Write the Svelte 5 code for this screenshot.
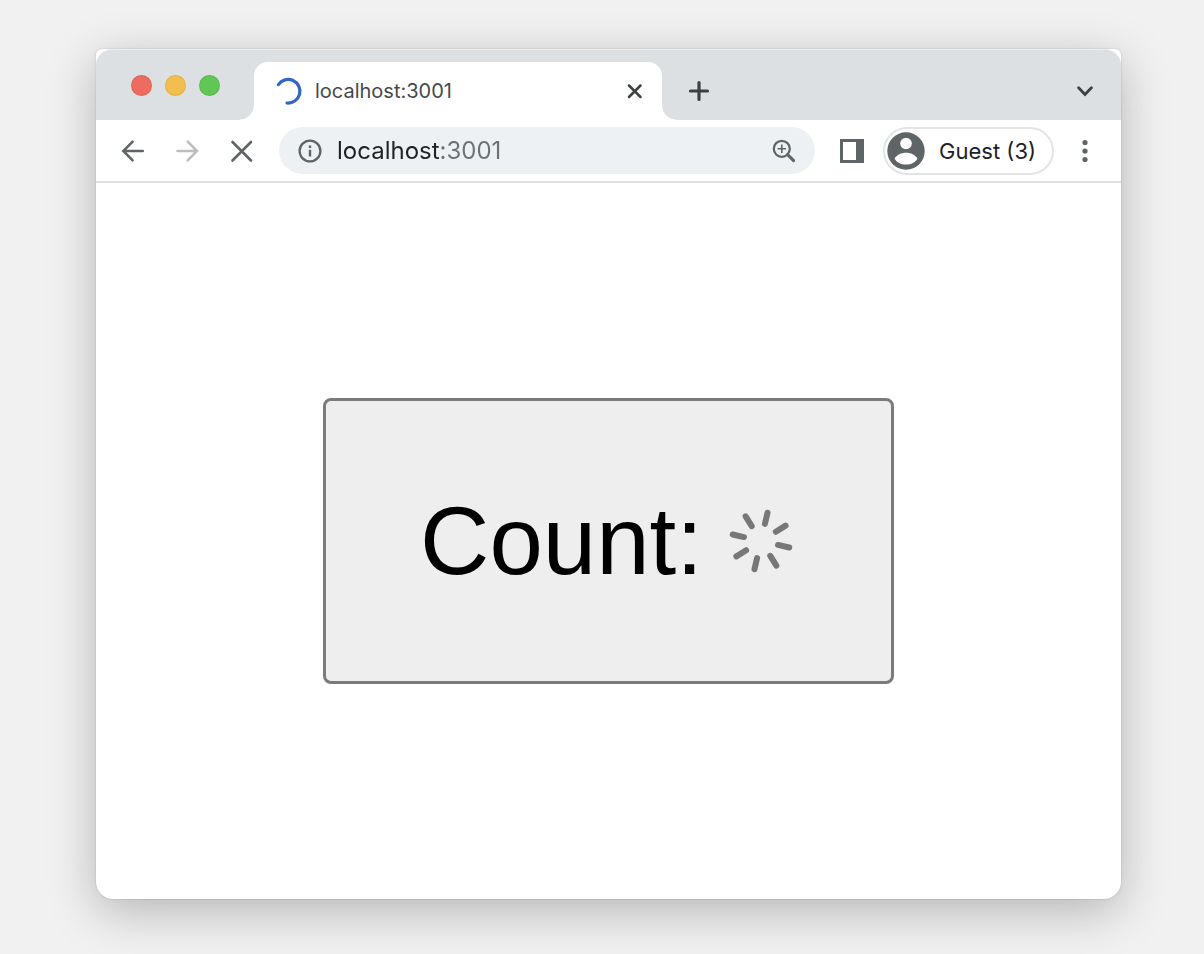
<script>
  const host = 'localhost';
  const port = 3001;
  let address = $state(`${host}:${port}`);
  const spokes = [0, 45, 90, 135, 180, 225, 270, 315];
</script>

<main class="desktop">
  <section class="window" aria-label="Browser window">
    <header class="tab-strip">
      <div class="lights">
        <button class="light close" aria-label="Close window"></button>
        <button class="light minimize" aria-label="Minimize window"></button>
        <button class="light zoom" aria-label="Zoom window"></button>
      </div>
      <div class="tab">
        <svg class="tab-loader" viewBox="0 0 26 26" aria-hidden="true">
          <path d="M2.400 6.600A11.800 11.800 0 1 1 11 25" fill="none" stroke="#3367c6" stroke-width="3.200" stroke-linecap="round" />
        </svg>
        <span class="tab-title">{host}:{port}</span>
        <button class="tab-close" aria-label="Close tab">
          <svg width="16" height="16" viewBox="0 0 16 16"><path d="M2 2.500l11.500 11.500M13.500 2.500L2 14" stroke="#3c4043" stroke-width="2.500" stroke-linecap="round" /></svg>
        </button>
      </div>
      <button class="strip-button new-tab" aria-label="New tab">
        <svg width="22" height="22" viewBox="0 0 22 22"><path d="M11 2.500v17M2.500 11h17" stroke="#3c4043" stroke-width="3.200" stroke-linecap="round" /></svg>
      </button>
      <button class="strip-button search-tabs" aria-label="Search tabs">
        <svg width="18" height="12" viewBox="0 0 18 12"><path d="M2.600 2.800L9 9.400l6.400-6.600" fill="none" stroke="#3c4043" stroke-width="2.800" stroke-linecap="round" /></svg>
      </button>
    </header>

    <nav class="toolbar" aria-label="Navigation">
      <button class="nav-button" aria-label="Back">
        <svg width="24" height="24" viewBox="0 0 24 24"><path d="M21.800 12H2.500M11.600 2.700L2.300 12l9.300 9.300" fill="none" stroke="#5f6566" stroke-width="2.500" stroke-linecap="round" /></svg>
      </button>
      <button class="nav-button" aria-label="Forward">
        <svg width="24" height="24" viewBox="0 0 24 24"><path d="M2.500 12h19.300M12.700 2.700L22 12l-9.300 9.300" fill="none" stroke="#bbbdbf" stroke-width="2.500" stroke-linecap="round" /></svg>
      </button>
      <button class="nav-button" aria-label="Stop loading">
        <svg width="24" height="24" viewBox="0 0 24 24"><path d="M3.500 3L22 21.500M22 3L3.500 21.500" stroke="#5f6566" stroke-width="2.600" stroke-linecap="round" /></svg>
      </button>

      <div class="omnibox">
        <button class="box-button" aria-label="View site information">
          <svg width="24" height="24" viewBox="0 0 24 24">
            <circle cx="12" cy="12" r="10.400" fill="none" stroke="#5f6566" stroke-width="2.300" />
            <path d="M12 10.700v6.900M12 6.500v2.500" stroke="#5f6566" stroke-width="2.400" />
          </svg>
        </button>
        <input class="address" type="text" aria-label="Address" bind:value={address} />
        <button class="box-button" aria-label="Page zoom">
          <svg width="24" height="24" viewBox="0 0 24 24">
            <circle cx="9.800" cy="9.800" r="8" fill="none" stroke="#5f6566" stroke-width="2.200" />
            <path d="M15.600 15.600l6 6" stroke="#5f6566" stroke-width="3" stroke-linecap="round" />
            <path d="M9.800 5.600v8.400M5.600 9.800h8.400" stroke="#5f6566" stroke-width="1.600" />
          </svg>
        </button>
      </div>

      <button class="panel-button" aria-label="Side panel">
        <svg width="24" height="24" viewBox="0 0 24 24"><path fill="#5f6566" fill-rule="evenodd" d="M0 0h24v24H0zM3 3v18h13V3z" /></svg>
      </button>
      <button class="profile">
        <svg width="38" height="38" viewBox="0 0 38 38" aria-hidden="true">
          <circle cx="19" cy="19" r="18.700" fill="#5f6566" />
          <circle cx="19" cy="11.500" r="5.800" fill="#fff" />
          <path d="M7.600 26.800C9.500 22.800 14.500 20.800 19 20.800s9.500 2 11.400 6C28.300 30.600 24 32.600 19 32.600S9.700 30.600 7.600 26.800z" fill="#fff" />
        </svg>
        <span>Guest (3)</span>
      </button>
      <button class="menu-button" aria-label="Menu">
        <svg width="6" height="24" viewBox="0 0 6 24" fill="#5f6566"><circle cx="3" cy="3.500" r="2.600" /><circle cx="3" cy="12" r="2.600" /><circle cx="3" cy="20.500" r="2.600" /></svg>
      </button>
    </nav>

    <div class="page">
      <button class="counter">
        <span>Count:</span>
        <svg class="spinner" viewBox="-38 -38 76 76" role="img" aria-label="Loading">
          <g transform="rotate(13)">
            {#each spokes as angle}
              <path d="M0-17.500V-29" transform="rotate({angle})" stroke="#777" stroke-width="6" stroke-linecap="round" />
            {/each}
          </g>
        </svg>
      </button>
    </div>
  </section>
</main>

<style>
  :global(body) {
    margin: 0;
    background: #f1f1f1;
  }

  button {
    display: flex;
    align-items: center;
    justify-content: center;
    flex: none;
    margin: 0;
    padding: 0;
    border: 0;
    background: none;
    color: inherit;
    font: inherit;
  }

  svg {
    display: block;
    flex: none;
  }

  .desktop {
    box-sizing: border-box;
    display: flex;
    min-height: 100vh;
    padding: 49px 83px 55px 96px;
    overflow: hidden;
    font-family: Inter, Roboto, sans-serif;
  }

  .window {
    flex: 1;
    min-width: 0;
    display: flex;
    flex-direction: column;
    border-radius: 6px 6px 17px 17px;
    background: #fff;
    box-shadow: 0 0 2px rgba(0, 0, 0, 0.2), 0 12px 48px rgba(0, 0, 0, 0.25);
  }

  .tab-strip {
    box-sizing: border-box;
    display: flex;
    align-items: center;
    height: 71px;
    padding: 12px 18px 0 35px;
    border-top: 1px solid #eceeef;
    border-radius: 16px 16px 0 0;
    background: #dce0e3;
  }

  .lights {
    display: flex;
    gap: 13px;
    margin-bottom: 11px;
  }

  .light {
    width: 21px;
    height: 21px;
    border-radius: 50%;
    box-shadow: inset 0 0 0 1px rgba(0, 0, 0, 0.08);
  }

  .close { background: #ed6b5f; }
  .minimize { background: #f4be4f; }
  .zoom { background: #62c655; }

  .tab {
    position: relative;
    box-sizing: border-box;
    flex: 0 1 408px;
    display: flex;
    align-items: center;
    gap: 13px;
    height: 58px;
    margin-left: 34px;
    padding: 0 13px 0 22px;
    border-radius: 14px 14px 0 0;
    background: #fff;
  }

  .tab::before,
  .tab::after {
    content: '';
    position: absolute;
    bottom: 0;
    width: 14px;
    height: 14px;
  }

  .tab::before {
    right: 100%;
    background: radial-gradient(circle at 0 0, transparent 13px, #fff 14px);
  }

  .tab::after {
    left: 100%;
    background: radial-gradient(circle at 100% 0, transparent 13px, #fff 14px);
  }

  .tab-loader {
    width: 26px;
    height: 26px;
    overflow: visible;
  }

  .tab-title {
    flex: 1;
    color: #45494c;
    font-size: 20px;
    line-height: 28px;
  }

  .tab-close {
    width: 28px;
    height: 28px;
  }

  .strip-button {
    width: 36px;
    height: 36px;
  }

  .new-tab { margin-left: 19px; }
  .search-tabs { margin-left: auto; }

  .toolbar {
    display: flex;
    align-items: center;
    height: 61px;
    padding: 0 5px 0 10px;
    border-bottom: 2px solid #dfe1e2;
  }

  .nav-button {
    width: 54px;
    height: 46px;
  }

  .omnibox {
    flex: 1;
    min-width: 0;
    display: flex;
    align-items: center;
    height: 47px;
    margin: 0 14px 0 11px;
    padding: 0 12px;
    border-radius: 24px;
    background: #edf1f4;
  }

  .box-button {
    width: 38px;
    height: 38px;
  }

  .address {
    flex: 1;
    min-width: 0;
    height: 38px;
    margin: 0;
    padding: 0 0 0 8px;
    border: 0;
    outline: 0;
    background: linear-gradient(90deg, #202124 111px, #6c7173 111px);
    background-clip: text;
    -webkit-background-clip: text;
    color: transparent;
    caret-color: #202124;
    font: 24px Inter, Roboto, sans-serif;
  }

  .panel-button {
    width: 46px;
    height: 46px;
    margin-right: 8px;
  }

  .profile {
    box-sizing: border-box;
    gap: 14px;
    height: 48px;
    padding: 0 16px 0 2px;
    border: 2px solid #e3e4e5;
    border-radius: 24px;
    color: #202124;
    font-size: 22px;
  }

  .menu-button {
    width: 62px;
    height: 46px;
  }

  .page {
    flex: 1;
    display: flex;
    align-items: center;
    justify-content: center;
  }

  .counter {
    gap: 20px;
    padding: 85px 92px 85px 94px;
    border: 3px solid #7b7b7b;
    border-radius: 8px;
    background: #eee;
    color: #000;
    font: 96px/110px "Liberation Sans", Arial, sans-serif;
  }

  .spinner {
    width: 76px;
    height: 76px;
  }
</style>
